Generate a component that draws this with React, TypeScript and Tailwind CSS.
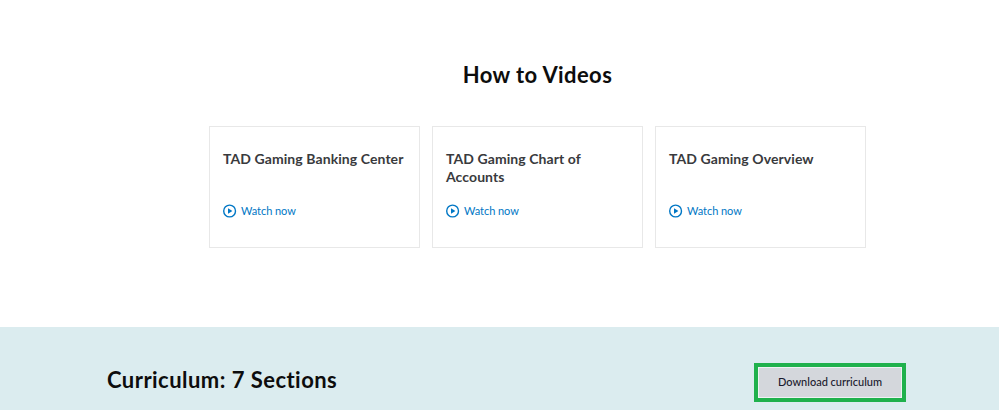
import React from "react";

const videos = [
  "TAD Gaming Banking Center",
  "TAD Gaming Chart of Accounts",
  "TAD Gaming Overview",
];

const PlayIcon: React.FC = () => (
  <svg width="14" height="14" viewBox="0 0 14 14" fill="none" className="shrink-0">
    <circle cx="6.6" cy="7" r="5.9" stroke="#0077c5" strokeWidth="1.4" />
    <path d="M5 4.2 L9.4 7 L5 9.8 Z" fill="#0077c5" />
  </svg>
);

const VideoCard: React.FC<{ title: string }> = ({ title }) => (
  <div className="w-[211px] h-[122px] border border-[#e8e8e8] pl-[13px] pr-2 pt-[23px] flex flex-col">
    <h3 className="text-[14px] leading-[18px] font-bold tracking-[0.08px] text-[#393a3d] h-[54px]">{title}</h3>
    <a className="flex items-center gap-[4px] text-[11px] leading-[14px] tracking-[-0.05px] text-[#0077c5]">
      <PlayIcon />
      <span>Watch now</span>
    </a>
  </div>
);

export default function App() {
  return (
    <div className="w-[999px] h-[410px] overflow-hidden bg-white font-['Lato','Open_Sans',sans-serif]">
      <section className="h-[327px] pt-[61px] pl-[209px]">
        <div className="w-[657px]">
          <h2 className="text-center text-[22px] leading-[27px] font-bold tracking-[0.4px] text-[#0d0d0d]">How to Videos</h2>
          <div className="flex gap-3 mt-[38px]">
            {videos.map((v) => (
              <VideoCard key={v} title={v} />
            ))}
          </div>
        </div>
      </section>
      <section className="h-[83px] bg-[#dbecef] pl-[107px] pr-[93px] pt-[36px] flex items-start justify-between">
        <h2 className="text-[22px] leading-[34px] font-bold tracking-[0.46px] text-[#0d0d0d]">Curriculum: 7 Sections</h2>
        <button className="w-[152px] h-[39px] border-4 border-[#1fb14c] bg-[#d4d7dc] outline outline-1 outline-offset-[-5px] outline-[#eef2f3] text-[11px] font-medium text-[#1a1a2e]">
          Download curriculum
        </button>
      </section>
    </div>
  );
}
